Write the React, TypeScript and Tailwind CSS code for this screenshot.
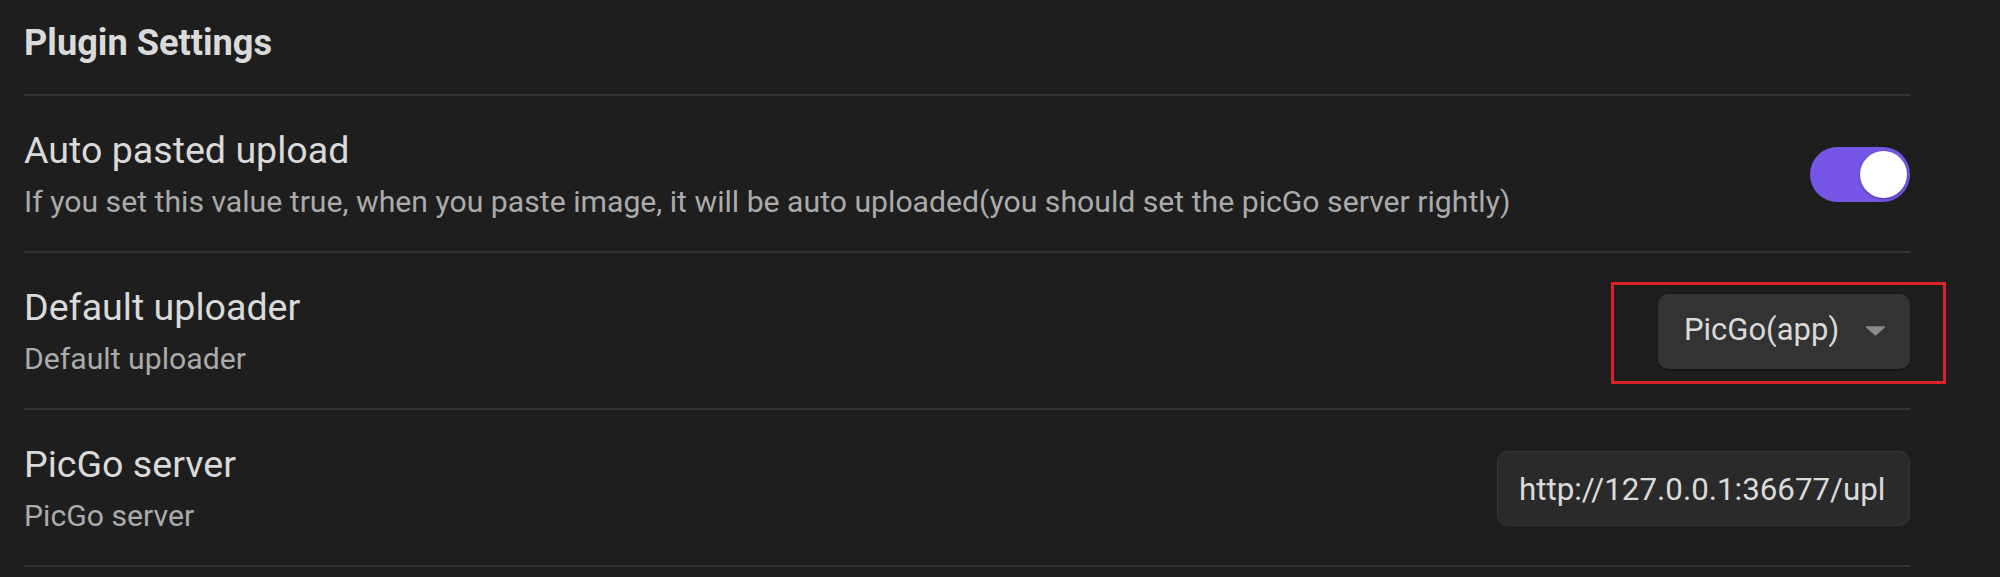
import React from "react";

function Toggle() {
  return (
    <div className="relative h-[55px] w-[100px] shrink-0 rounded-full bg-[#7656e6]">
      <div className="absolute right-[3px] top-[4px] h-[47px] w-[47px] rounded-full bg-white shadow-[0_1px_3px_rgba(0,0,0,0.35)]" />
    </div>
  );
}

function Dropdown() {
  return (
    <div className="relative shrink-0">
      <div className="flex h-[75px] w-[252px] items-center justify-between rounded-[10px] bg-[#333333] pl-[26px] pr-[24px] pb-[3px] shadow-[0_1px_3px_rgba(0,0,0,0.45)]">
        <span className="text-[31px] leading-[36px] text-[#dadada]">PicGo(app)</span>
        <svg width="21" height="10" viewBox="0 0 21 10" className="mt-[2px]">
          <path d="M1.5 1 L19.5 1 L10.5 9 Z" fill="#8a8a8a" stroke="#8a8a8a" strokeWidth="1.5" strokeLinejoin="round" />
        </svg>
      </div>
      <div className="pointer-events-none absolute -left-[47px] -right-[36px] -top-[12px] -bottom-[15px] border-[3px] border-[#dc2229]" />
    </div>
  );
}

function TextInput() {
  return (
    <div className="flex h-[75px] w-[413px] shrink-0 items-center rounded-[11px] border border-[#363636] bg-[#2a2a2a] pl-[21px] pr-[24px] pt-[3px]">
      <div className="w-full overflow-hidden whitespace-nowrap text-[31.3px] leading-[37px] text-[#dadada]">
        http://127.0.0.1:36677/upload
      </div>
    </div>
  );
}

function SettingRow({
  title,
  desc,
  control,
}: {
  title: string;
  desc: string;
  control: React.ReactNode;
}) {
  return (
    <div className="flex items-center justify-between border-b-2 border-[#343434] pt-[32px] pb-[31px]">
      <div className="flex flex-col">
        <div className="text-[37.6px] leading-[44px] text-[#dadada]">{title}</div>
        <div className="mt-[12px] text-[30.2px] leading-[36px] text-[#ababab]">{desc}</div>
      </div>
      {control}
    </div>
  );
}

export default function App() {
  return (
    <div
      className="min-h-[577px] w-[2000px] overflow-hidden bg-[#1e1e1e] pl-[24px]"
      style={{ fontFamily: 'Roboto, "Open Sans", sans-serif' }}
    >
      <div className="w-[1886px]">
        <div className="border-b-2 border-[#343434] pt-[22px] pb-[30px]">
          <div className="text-[36.2px] font-bold leading-[42px] text-[#dadada]">Plugin Settings</div>
        </div>
        <SettingRow
          title="Auto pasted upload"
          desc="If you set this value true, when you paste image, it will be auto uploaded(you should set the picGo server rightly)"
          control={<Toggle />}
        />
        <SettingRow title="Default uploader" desc="Default uploader" control={<Dropdown />} />
        <SettingRow title="PicGo server" desc="PicGo server" control={<TextInput />} />
      </div>
    </div>
  );
}
